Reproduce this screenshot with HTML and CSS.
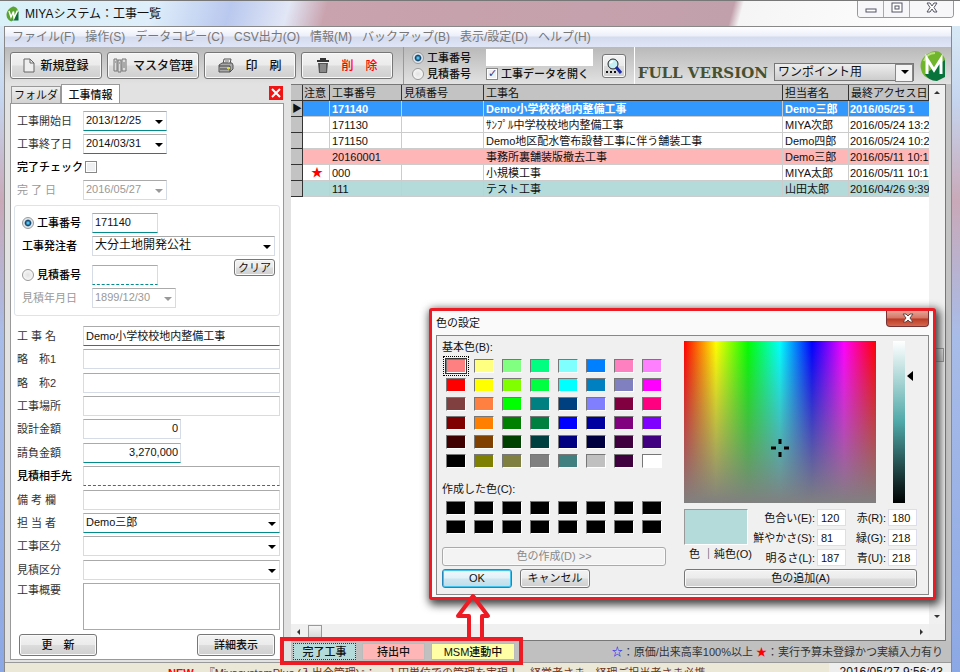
FILE: index.html
```
<!DOCTYPE html>
<html lang="ja">
<head>
  <meta charset="UTF-8" />
  <meta name="viewport" content="width=device-width, initial-scale=1.0"/>
  <title>MIYAシステム：工事一覧</title>
  <link rel="stylesheet" href="styles.css">
</head>
<body>

  <header class="titlebar">
    <svg class="app-icon" viewBox="0 0 26 30">
      <path d="M14 0C3 4-1 14 2 22c2 5 6 7 9 8L25 12C24 4 19 0 14 0z" fill="#5aa532"/>
      <path d="M25 10v18H12z" fill="#0b6b3a"/>
      <path d="M6 9l4 12 5-11 1 13 7-15" fill="none" stroke="#fff" stroke-width="3"/>
    </svg>
    <h1>MIYAシステム：工事一覧</h1>
    <div class="window-buttons">
      <button aria-label="最小化"><svg width="12" height="12"><rect x="1" y="7" width="10" height="3" fill="#fff" stroke="#556"/></svg></button>
      <button aria-label="最大化"><svg width="12" height="12"><rect x="1" y="1" width="10" height="9" fill="#fff" stroke="#556"/><rect x="4" y="4" width="4" height="3" fill="#fff" stroke="#556"/></svg></button>
      <button class="wide" aria-label="閉じる"><svg width="12" height="12"><path d="M1 1h3l2 3 2-3h3L8 5.500l3 4.500H8L6 7l-2 3H1l3-4.500z" fill="#fff" stroke="#556"/></svg></button>
    </div>
  </header>

  <div class="app">
    <nav class="menubar">
      <a href="#">ファイル(F)</a>
      <a href="#">操作(S)</a>
      <a href="#">データコピー(C)</a>
      <a href="#">CSV出力(O)</a>
      <a href="#">情報(M)</a>
      <a href="#">バックアップ(B)</a>
      <a href="#">表示/設定(D)</a>
      <a href="#">ヘルプ(H)</a>
    </nav>

    <div class="toolbar">
      <div class="tool-buttons">
        <button class="tool"><svg width="12" height="15"><path d="M1 1h6l4 4v9H1zM7 1v4h4" fill="#eee" stroke="#666"/></svg>新規登録</button>
        <button class="tool"><svg width="15" height="15"><path d="M1 1h3v12H1zM5 2h3v12H5zM9 1h4v12H9z" fill="#ddd" stroke="#777"/><path d="M2 4h1M6 5h1M11 4v6" stroke="#777"/></svg>マスタ管理</button>
        <button class="tool"><svg width="16" height="15"><path d="M5 6l1-5h7l-1 5" fill="#eee" stroke="#555"/><path d="M7 3h4M6 5h4" stroke="#777"/><path d="M1 7l3-2h10l1 2v4l-3 3H1z" fill="#aaa" stroke="#555"/><path d="M1 8h11v6M2 11h8" fill="none" stroke="#444"/><path d="M9 9h3v2H9z" fill="#dde02c"/></svg><span>印　刷</span></button>
        <button class="tool delete"><svg width="14" height="15"><path d="M5 2V1h4v1M1 3h12" fill="none" stroke="#333" stroke-width="2"/><path d="M2 5h10l-1 10H3z" fill="#555"/><path d="M5 6v8M7 6v8M9 6v8" stroke="#bbb"/></svg><span>削　除</span></button>
      </div>
      <div class="search-box">
        <div class="search-radios">
          <label><input type="radio" name="searchBy" checked>工事番号</label>
          <label><input type="radio" name="searchBy">見積番号</label>
        </div>
        <div class="search-field">
          <input type="text" aria-label="検索">
          <label><input type="checkbox" checked>工事データを開く</label>
        </div>
        <button class="search" aria-label="検索実行"><svg width="18" height="18"><circle cx="8" cy="7" r="5" fill="#c4f0f4" stroke="#222"/><path d="M5 6l3-2" stroke="#fff" stroke-width="2"/><path d="M11 10l5 6" stroke="#1b2aa8" stroke-width="3"/><path d="M1 15h2M5 15h2M9 15h2" stroke="#111" stroke-width="2"/></svg></button>
      </div>
      <div class="edition">
        <strong>FULL VERSION</strong>
        <span class="select boxed"><select aria-label="メニュー"><option>ワンポイント用</option></select></span>
        <svg class="logo" viewBox="0 0 26 30">
          <path d="M15 0C4 2-1 11 1 18c1 6 5 9 10 10l14-9V8C23 3 20 0 15 0z" fill="#71b52c"/>
          <path d="M25 9v17l-8 4c-6 0-10-3-12-7z" fill="#08733b"/>
          <path d="M4 10C6 5 10 2 15 2" fill="none" stroke="#b8e37b" stroke-width="2"/>
          <path d="M7 23V8l7 11 7-11v15" fill="none" stroke="#fff" stroke-width="3"/>
        </svg>
      </div>
    </div>

    <div class="workspace">
      <aside class="sidebar">
        <div class="tabs">
          <button class="tab">フォルダ</button>
          <button class="tab active">工事情報</button>
          <button class="close" aria-label="閉じる"><svg width="14" height="14"><path d="M3 3l8 8M11 3l-8 8" stroke="#fff" stroke-width="2"/></svg></button>
        </div>
        <form class="panel">
          <div class="fields dates">
            <div class="row"><label for="startDate">工事開始日</label><span class="select date filled"><input id="startDate" type="text" value="2013/12/25"></span></div>
            <div class="row"><label for="endDate">工事終了日</label><span class="select date filled"><input id="endDate" type="text" value="2014/03/31"></span></div>
            <div class="row"><label for="done" class="strong">完了チェック</label><input id="done" type="checkbox"></div>
            <div class="row disabled"><label for="doneDate">完 了 日</label><span class="select date"><input id="doneDate" type="text" value="2016/05/27" disabled></span></div>
          </div>

          <div class="number-box">
            <div class="row"><label class="strong"><input type="radio" name="kind" checked>工事番号</label><input class="short filled" type="text" value="171140" aria-label="工事番号"></div>
            <div class="row"><label for="client" class="strong">工事発注者</label><span class="select"><select id="client" class="large"><option>大分土地開発公社</option></select></span></div>
            <div class="row clear-row"><label class="strong"><input type="radio" name="kind">見積番号</label><input class="short dashed" type="text" aria-label="見積番号"><button type="button" class="btn clear">クリア</button></div>
            <div class="row disabled"><label for="quoteDate">見積年月日</label><span class="select date"><input id="quoteDate" type="text" value="1899/12/30" disabled></span></div>
          </div>

          <div class="fields details">
            <div class="row"><label for="name">工 事 名</label><input id="name" class="filled" type="text" value="Demo小学校校地内整備工事"></div>
            <div class="row"><label for="short1">略　称1</label><input id="short1" type="text"></div>
            <div class="row"><label for="short2">略　称2</label><input id="short2" type="text"></div>
            <div class="row"><label for="place">工事場所</label><input id="place" type="text"></div>
            <div class="row"><label for="design">設計金額</label><input id="design" class="money" type="text" value="0"></div>
            <div class="row"><label for="contract">請負金額</label><input id="contract" class="money filled" type="text" value="3,270,000"></div>
            <div class="row"><label for="partner" class="strong">見積相手先</label><input id="partner" class="dashed" type="text"></div>
            <div class="row"><label for="memo">備 考 欄</label><input id="memo" type="text"></div>
            <div class="row"><label for="staff">担 当 者</label><span class="select filled"><select id="staff"><option>Demo三郎</option></select></span></div>
            <div class="row"><label for="workType">工事区分</label><span class="select"><select id="workType"><option></option></select></span></div>
            <div class="row"><label for="quoteType">見積区分</label><span class="select"><select id="quoteType"><option></option></select></span></div>
            <div class="row tall"><label for="summary">工事概要</label><textarea id="summary"></textarea></div>
          </div>

          <div class="panel-actions">
            <button type="button" class="btn">更　新</button>
            <button type="button" class="btn">詳細表示</button>
          </div>
        </form>
      </aside>

      <main class="list">
        <div class="grid">
          <div class="grid-body">
            <table>
              <colgroup>
                <col class="c-mark"><col class="c-note"><col class="c-no"><col class="c-quote"><col><col class="c-staff"><col class="c-date">
              </colgroup>
              <thead>
                <tr><th></th><th>注意</th><th>工事番号</th><th>見積番号</th><th>工事名</th><th>担当者名</th><th>最終アクセス日時</th></tr>
              </thead>
              <tbody>
                <tr class="selected"><th>▶</th><td></td><td>171140</td><td></td><td>Demo小学校校地内整備工事</td><td>Demo三郎</td><td>2016/05/25 1</td></tr>
                <tr><th></th><td></td><td>171130</td><td></td><td>ｻﾝﾌﾟﾙ中学校校地内整備工事</td><td>MIYA次郎</td><td>2016/05/24 13:2</td></tr>
                <tr><th></th><td></td><td>171150</td><td></td><td>Demo地区配水管布設替工事に伴う舗装工事</td><td>Demo四郎</td><td>2016/05/24 10:2</td></tr>
                <tr class="out"><th></th><td></td><td>20160001</td><td></td><td>事務所裏舗装版撤去工事</td><td>Demo三郎</td><td>2016/05/11 10:1</td></tr>
                <tr><th></th><td class="star">★</td><td>000</td><td></td><td>小規模工事</td><td>MIYA太郎</td><td>2016/05/11 10:1</td></tr>
                <tr class="finished"><th></th><td></td><td>111</td><td></td><td>テスト工事</td><td>山田太郎</td><td>2016/04/26 9:39</td></tr>
              </tbody>
            </table>
          </div>
          <div class="scroll-v"><i class="up"></i><i class="thumb"></i><i class="down"></i></div>
          <div class="scroll-h"><i class="left"></i><i class="thumb"></i><i class="right"></i></div>
        </div>

        <div class="legend">
          <button class="key finished">完了工事</button>
          <button class="key out">持出中</button>
          <button class="key linked">MSM連動中</button>
          <p><span class="blue">☆</span>：原価/出来高率100%以上 <span class="red">★</span>：実行予算未登録かつ実績入力有り</p>
          <div class="highlight"></div>
          <svg class="arrow" width="40" height="50"><path d="M15 50V25H4L19 5l15 20H28V50" fill="none" stroke="#ed1c24" stroke-width="4" stroke-linejoin="round"/></svg>
        </div>
      </main>

      <section class="dialog" role="dialog" aria-label="色の設定">
        <div class="dialog-title"><h2>色の設定</h2><button aria-label="閉じる"><svg width="12" height="10"><path d="M1 1h3l2 2 2-2h3L8 5l3 4H8L6 7 4 9H1l3-4z" fill="#fff" stroke="#644"/></svg></button></div>
        <div class="dialog-body">
          <div class="palette">
            <h3>基本色(B):</h3>
            <div class="swatches basic" id="basicColors"></div>
            <h3>作成した色(C):</h3>
            <div class="swatches custom" id="customColors"></div>
            <button class="btn make" disabled>色の作成(D) &gt;&gt;</button>
            <div class="confirm"><button class="btn ok">OK</button><button class="btn">キャンセル</button></div>
          </div>
          <div class="mixer">
            <div class="pickers">
              <div class="spectrum"><svg width="18" height="18"><path d="M9 0v5M9 13v5M0 9h5M13 9h5" stroke="#000" stroke-width="3"/></svg></div>
              <div class="lightness"><i></i></div>
            </div>
            <div class="values">
              <div class="current"><div class="sample"></div><span>色 ｜純色(O)</span></div>
              <div class="numbers">
                <label for="hue">色合い(E):</label><input id="hue" type="text" value="120">
                <label for="red">赤(R):</label><input id="red" type="text" value="180">
                <label for="sat">鮮やかさ(S):</label><input id="sat" type="text" value="81">
                <label for="green">緑(G):</label><input id="green" type="text" value="218">
                <label for="lum">明るさ(L):</label><input id="lum" type="text" value="187">
                <label for="blue">青(U):</label><input id="blue" type="text" value="218">
              </div>
            </div>
            <button class="btn">色の追加(A)</button>
          </div>
        </div>
      </section>
    </div>

    <footer class="ticker">
      <p><b>NEW</b>『MiyasystemPlus (入出金管理)』；　１円単位での管理を実現！　経営者さま、経理ご担当者さま必携</p>
      <time>2016/05/27 9:56:43</time>
    </footer>
  </div>

  <script src="script.js"></script>
</body>
</html>
```
FILE: script.js
```
const basicColors = [
  "#ff8080", "#ffff80", "#80ff80", "#00ff80", "#80ffff", "#0080ff", "#ff80c0", "#ff80ff",
  "#ff0000", "#ffff00", "#80ff00", "#00ff40", "#00ffff", "#0080c0", "#8080c0", "#ff00ff",
  "#804040", "#ff8040", "#00ff00", "#008080", "#004080", "#8080ff", "#800040", "#ff0080",
  "#800000", "#ff8000", "#008000", "#008040", "#0000ff", "#0000a0", "#800080", "#8000ff",
  "#400000", "#804000", "#004000", "#004040", "#000080", "#000040", "#400040", "#400080",
  "#000000", "#808000", "#808040", "#808080", "#408080", "#c0c0c0", "#400040", "#ffffff"
];

function addSwatches(id, colors) {
  const box = document.getElementById(id);
  colors.forEach(color => {
    const button = document.createElement("button");
    button.className = "swatch";
    button.style.background = color;
    button.setAttribute("aria-label", color);
    box.appendChild(button);
  });
}

addSwatches("basicColors", basicColors);
addSwatches("customColors", Array(16).fill("#000000"));
document.querySelector("#basicColors .swatch").classList.add("current-swatch");
```
FILE: styles.css
```
* {
  box-sizing: border-box;
}
body {
  font-family: "Liberation Sans", "Noto Sans CJK JP", sans-serif;
  font-size: 11px;
  line-height: 14px;
  color: #111;
  margin: 0;
  padding: 0 8px 0 4px;
  height: 100vh;
  display: flex;
  flex-direction: column;
  overflow: hidden;
  background: linear-gradient(#dff0f8, #c5d5ee 15%, #c9a9b8 30%, #a8bce8 50%, #8ca8e4);
}
h1, h2, h3, p {
  margin: 0;
  font-size: inherit;
  font-weight: normal;
}
button, input, select, textarea {
  font: inherit;
  color: inherit;
  margin: 0;
  border-radius: 0;
}
button {
  padding: 0;
}

/* title bar */
.titlebar {
  flex: none;
  height: 26px;
  margin: 0 -8px 0 -4px;
  padding: 0 6px;
  display: flex;
  align-items: center;
  gap: 6px;
  font-size: 12px;
  border-top: 1px solid #777;
  background: linear-gradient(105deg, #d9f1f8 0, #dfeefa 16%, #b9c8ee 24%, #e2e7f6 30%, #c9a3ae 34%, #c2a0ab 76%, #f5f5f5 77%, #fff);
}
.app-icon {
  width: 13px;
  height: 16px;
}
.window-buttons {
  margin-left: auto;
  align-self: flex-start;
  display: flex;
  border: 1px solid #999;
  border-top: 0;
  border-radius: 0 0 4px 4px;
  overflow: hidden;
}
.window-buttons button {
  width: 26px;
  height: 16px;
  border: 0;
  border-right: 1px solid #aaa;
  background: #f7f7fa;
}
.window-buttons .wide {
  width: 43px;
  border-right: 0;
}

.app {
  flex: 1;
  min-height: 0;
  display: flex;
  flex-direction: column;
  border: 1px solid #888;
  border-bottom: 0;
  background: #c3c3c3;
}
.menubar {
  flex: none;
  display: flex;
  gap: 10px;
  height: 20px;
  padding: 0 7px;
  align-items: center;
  font-size: 12px;
  white-space: nowrap;
  background: linear-gradient(#fff, #eceffa 45%, #d4dbee 50%, #e0e6f6);
}
.menubar a {
  color: #777;
  text-decoration: none;
}

/* toolbar */
.toolbar {
  flex: none;
  height: 37px;
  display: flex;
  background: linear-gradient(#b9b9b9, #e2e2e2);
  padding: 0 5px;
}
.tool-buttons {
  display: flex;
  align-items: center;
  gap: 5px;
}
.btn, .tool, .search {
  border: 1px solid #777;
  border-radius: 3px;
  box-shadow: inset 0 0 0 1px #fafafa;
  background: linear-gradient(#f3f3f3, #ebebeb 48%, #dcdcdc 52%, #cfcfcf);
}
.tool {
  width: 92px;
  height: 27px;
  display: flex;
  align-items: center;
  justify-content: center;
  gap: 5px;
  font-size: 12px;
  font-weight: 500;
}
.tool span {
  margin-left: 6px;
}
.delete {
  color: #f00;
}
.search-box {
  display: flex;
  gap: 9px;
  align-items: center;
  width: 232px;
  margin-left: 10px;
  padding: 0 8px;
  border-left: 1px solid #999;
  border-right: 1px solid #fff;
}
.search-radios label, .search-field label {
  display: flex;
  align-items: center;
  gap: 3px;
  height: 16px;
  font-weight: 500;
  white-space: nowrap;
}
.search-field input[type=text] {
  display: block;
  width: 107px;
  height: 17px;
  border: 0;
}
.search-radios {
  flex: 1;
}
.search {
  width: 24px;
  height: 24px;
  display: flex;
  align-items: center;
  justify-content: center;
}
input[type=radio] {
  appearance: none;
  width: 12px;
  height: 12px;
  border: 1px solid #999;
  border-radius: 50%;
  background: radial-gradient(#e2e2e2, #fff);
}
input[type=radio]:checked {
  background: radial-gradient(#4fc3ee 10%, #123f66 38%, #dfe8ee 55%);
}
input[type=checkbox] {
  appearance: none;
  position: relative;
  width: 12px;
  height: 12px;
  border: 1px solid #888;
  background: #eef0f2;
  box-shadow: inset 0 0 0 1px #fff;
}
input[type=checkbox]:checked::after {
  content: "✓";
  position: absolute;
  left: 1px;
  top: -2px;
  font: bold 11px "DejaVu Sans", sans-serif;
  color: #26418f;
}
.edition {
  flex: 1;
  display: flex;
  align-items: flex-end;
  justify-content: flex-end;
  gap: 6px;
  padding-bottom: 3px;
}
.edition strong {
  font: bold 15px/15px "DejaVu Serif", serif;
  color: #48512f;
  white-space: nowrap;
}
.logo {
  width: 26px;
  height: 30px;
}

/* fields */
.panel input[type=text], .panel textarea, .panel select {
  width: 100%;
  height: 20px;
  padding: 0 2px 2px;
  border: 1px solid #d5dce6;
  border-top-color: #aaa;
  background: #fff;
}
.select {
  position: relative;
  display: block;
  flex: 1;
}
.select select {
  appearance: none;
  display: block;
}
.select::after {
  content: "";
  position: absolute;
  right: 4px;
  top: 9px;
  border: 4px solid transparent;
  border-top-color: #000;
  border-bottom: 0;
}
.select.date {
  flex: none;
  width: 84px;
}
.select.boxed {
  flex: none;
  width: 140px;
  height: 18px;
  border: 1px solid #777;
  background: linear-gradient(#eee, #ccc);
}
.boxed select {
  width: 100%;
  height: 16px;
  padding: 0 3px;
  border: 0;
  font-size: 12px;
  background: none;
}
.select.boxed::after {
  top: 6px;
}
.select.boxed::before {
  content: "";
  position: absolute;
  right: 0;
  top: 0;
  width: 16px;
  height: 16px;
  border: 1px solid #888;
  background: #f4f4f4;
}
.panel input[type=text].filled, .panel .filled input[type=text], .panel .filled select {
  border-bottom: 1px solid #008c8c;
}
.panel input[type=text].dashed {
  border-bottom: 1px dashed #008c8c;
}
.panel input[type=text].short {
  width: 66px;
}
.panel input[type=text].money {
  width: 98px;
  text-align: right;
}
.panel select.large {
  font-size: 12px;
}

.workspace {
  position: relative;
  flex: 1;
  min-height: 0;
  display: flex;
}
.sidebar {
  flex: none;
  width: 286px;
  padding: 0 7px 2px 5px;
  display: flex;
  flex-direction: column;
  background: #e2e2e2;
}
.tabs {
  display: flex;
  align-items: flex-end;
  height: 19px;
  padding-left: 1px;
}
.tab {
  width: 50px;
  height: 17px;
  border: 1px solid #999;
  border-bottom: 0;
  background: linear-gradient(#f0f0f0, #d2d2d2);
}
.tab.active {
  width: 59px;
  height: 20px;
  margin-bottom: -1px;
  font-weight: 500;
  background: #fff;
}
.close {
  width: 14px;
  height: 14px;
  margin: 0 1px 3px auto;
  border: 0;
  background: #f01414;
}
.close svg {
  display: block;
}
.panel {
  flex: 1;
  min-height: 0;
  display: flex;
  flex-direction: column;
  border: 1px solid #999;
  background: #fff;
  padding: 7px 3px 3px;
}
.row {
  display: flex;
  align-items: center;
  height: 20px;
}
.row > label {
  flex: none;
  width: 66px;
  display: flex;
  align-items: center;
  gap: 3px;
  white-space: nowrap;
  color: #333;
}
.row > label.strong {
  color: #000;
  font-weight: 500;
}
.row.disabled, .row.disabled > label {
  color: #999;
}
.disabled .select::after {
  border-top-color: #999;
}
.row #done {
  margin-left: 2px;
}
.fields {
  display: flex;
  flex-direction: column;
  padding-left: 3px;
}
.dates {
  gap: 3px;
}
.number-box {
  flex: none;
  display: flex;
  flex-direction: column;
  gap: 3px;
  margin: 5px 0 10px;
  padding: 7px 4px;
  border: 1px solid #dde3ea;
  border-radius: 3px;
}
.number-box .row > label {
  width: 73px;
  padding-left: 3px;
}
.number-box .clear-row {
  height: 26px;
  align-items: flex-end;
}
.clear-row > label {
  height: 20px;
}
.btn.clear {
  width: 41px;
  height: 17px;
  margin: 0 0 9px auto;
}
.details {
  flex: 1;
  justify-content: space-between;
}
.row.tall {
  height: 47px;
  align-items: flex-start;
}
.panel textarea {
  height: 47px;
  resize: none;
  display: block;
  border-color: #aaa;
}
.panel-actions {
  display: flex;
  justify-content: space-between;
  padding: 4px 5px 0;
}
.panel-actions .btn {
  width: 78px;
  height: 22px;
  font-weight: 500;
}

/* list */
.list {
  flex: 1;
  min-width: 0;
  display: flex;
  flex-direction: column;
}
.grid {
  flex: 1;
  min-height: 0;
  display: grid;
  grid-template-columns: 1fr 16px;
  grid-template-rows: 1fr 16px;
  margin-right: 5px;
  border: 1px solid #777;
  border-width: 1px 1px 1px 0;
  background: #eee;
}
.grid-body {
  overflow: hidden;
  background: #fff;
}
table {
  width: 100%;
  table-layout: fixed;
  border-collapse: separate;
  border-spacing: 0;
}
.c-mark { width: 12px; }
.c-note { width: 27px; }
.c-no { width: 72px; }
.c-quote { width: 82px; }
.c-staff { width: 66px; }
.c-date { width: 80px; }
th, td {
  height: 16px;
  padding: 0 0 0 2px;
  line-height: 14px;
  text-align: left;
  font-weight: normal;
  white-space: nowrap;
  overflow: hidden;
  border-right: 1px solid #ccc;
  border-bottom: 1px solid #ccc;
}
td:last-child {
  padding-left: 1px;
  border-right: 0;
}
th {
  background: #c3c3c3;
  border-color: #333;
}
tbody th {
  padding: 0 0 0 1px;
  font-size: 10px;
}
thead th:nth-child(2) {
  padding-left: 1px;
}
.selected td {
  background: #3398fd;
  color: #fff;
  font-weight: bold;
}
.out td, .key.out {
  background: #ffb6b6;
}
.finished td, .key.finished {
  background: #b4dada;
}
.star {
  color: #f00;
  text-align: center;
  font-size: 12px;
}
.scroll-v, .scroll-h {
  display: flex;
  align-items: center;
  justify-content: space-between;
  background: #f0f0f0;
  padding: 6px;
}
.scroll-v {
  flex-direction: column;
  padding: 6px 0;
}
.scroll-h .left, .scroll-h .right, .scroll-v .up, .scroll-v .down {
  border: 3px solid transparent;
}
.scroll-v .up { border-bottom-color: #333; border-top: 0; }
.scroll-v .down { border-top-color: #333; border-bottom: 0; }
.scroll-h .left { border-right-color: #333; border-left: 0; }
.scroll-h .right { border-left-color: #333; border-right: 0; }
.thumb {
  width: 14px;
  height: 14px;
  border: 1px solid #999;
  background: linear-gradient(#f5f5f5, #d5d5d5);
}
.scroll-h .thumb {
  margin: 0 auto 0 8px;
}
.legend {
  position: relative;
  flex: none;
  height: 21px;
  display: flex;
  align-items: center;
  gap: 6px;
  padding: 0 8px 0 2px;
  background: #c0c0c0;
}
.key {
  width: 63px;
  height: 17px;
  border: 1px solid #bbb;
  line-height: 14px;
  font-weight: 500;
}
.key.finished {
  border: 1px dotted #333;
}
.key.linked {
  width: 84px;
  background: #ffffa6;
}
.legend p {
  margin-left: auto;
  white-space: nowrap;
  color: #333;
}
.blue { color: #00f; }
.red { color: #f00; }
.highlight {
  position: absolute;
  left: -11px;
  top: -4px;
  width: 243px;
  height: 28px;
  border: 4px solid #ed1c24;
  z-index: 3;
}
.arrow {
  position: absolute;
  left: 163px;
  bottom: 21px;
  z-index: 3;
}

/* color dialog */
.dialog {
  position: absolute;
  right: 15px;
  bottom: 62px;
  width: 507px;
  padding: 0 4px 2px;
  border: 3px solid #ed1c24;
  border-radius: 3px;
  background: #fafafa;
  box-shadow: 2px 3px 8px 2px #444;
}
.dialog-title {
  display: flex;
  justify-content: space-between;
  align-items: center;
  height: 24px;
}
.dialog-title button {
  align-self: flex-start;
  width: 43px;
  height: 16px;
  border: 1px solid #733;
  border-top: 0;
  border-radius: 0 0 4px 4px;
  background: linear-gradient(#e6a496, #d57464 48%, #b93a24 52%, #d6674e);
}
.dialog-body {
  display: flex;
  justify-content: space-between;
  padding: 5px 11px 6px 5px;
  border: 1px solid #888;
  background: #f0f0f0;
}
.palette {
  width: 224px;
  display: flex;
  flex-direction: column;
}
.palette h3 {
  height: 18px;
  line-height: 12px;
}
.swatches {
  display: grid;
  grid-template-columns: repeat(8, 20px);
  grid-auto-rows: 14px;
  gap: 5px 8px;
  padding-left: 4px;
}
.basic {
  margin-bottom: 15px;
}
.custom {
  margin-bottom: 13px;
}
.swatch {
  border: 1px solid #fff;
  border-top-color: #777;
  border-left-color: #777;
}
.current-swatch {
  outline: 1px dotted #000;
  outline-offset: 2px;
  box-shadow: 0 0 0 1px #333;
}
.dialog .btn {
  height: 19px;
  line-height: 15px;
}
.dialog .make {
  border-color: #aaa;
  color: #888;
  background: #f3f3f3;
}
.confirm {
  display: flex;
  gap: 8px;
  margin-top: 3px;
}
.confirm .btn {
  width: 70px;
}
.dialog .ok {
  border-color: #2386b8;
  box-shadow: inset 0 0 0 1px #43c4ee;
  background: linear-gradient(#f1f8fb, #e2f1f8 48%, #cde6f1 52%, #c0dcea);
}
.mixer {
  width: 233px;
  display: flex;
  flex-direction: column;
}
.pickers {
  display: flex;
  gap: 17px;
  height: 162px;
}
.spectrum {
  position: relative;
  width: 192px;
  background:
    linear-gradient(rgba(128, 128, 128, 0), #808080),
    linear-gradient(90deg, #f00, #ff0, #0f0, #0ff, #00f, #f0f, #f00);
}
.spectrum svg {
  position: absolute;
  left: 87px;
  top: 98px;
}
.lightness {
  position: relative;
  width: 12px;
  background: linear-gradient(#fff, #4fa8a8 50%, #000);
}
.lightness i {
  position: absolute;
  left: 14px;
  top: 30px;
  border: 5px solid transparent;
  border-left: 0;
  border-right: 6px solid #000;
}
.values {
  display: flex;
  justify-content: space-between;
  margin: 6px 0 3px;
}
.current {
  white-space: nowrap;
  width: 64px;
  padding-bottom: 2px;
}
.current span {
  padding-left: 5px;
}
.sample {
  height: 36px;
  margin-bottom: 2px;
  border: 1px solid #aaa;
  border-color: #999 #fff #fff #999;
  background: #b4dada;
}
.numbers {
  display: grid;
  grid-template-columns: 66px 29px 38px 29px;
  grid-auto-rows: 17px;
  gap: 3px 2px;
  align-items: center;
  white-space: nowrap;
}
.numbers label {
  justify-self: end;
}
.numbers input {
  width: 29px;
  height: 17px;
  padding: 0 3px;
  border: 1px solid #dde;
  background: #fff;
}

/* news ticker */
.ticker {
  flex: none;
  height: 10px;
  display: flex;
  overflow: hidden;
  border-top: 1px solid #999;
  background: #ece8d8;
  white-space: nowrap;
}
.ticker p {
  flex: 1;
  padding: 3px 0 0 163px;
  color: #6b3320;
}
.ticker b {
  margin-right: 10px;
  color: #f00;
}
.ticker time {
  width: 122px;
  padding: 2px 8px 0 0;
  font-size: 12px;
  text-align: right;
  background: #eee;
}
```
